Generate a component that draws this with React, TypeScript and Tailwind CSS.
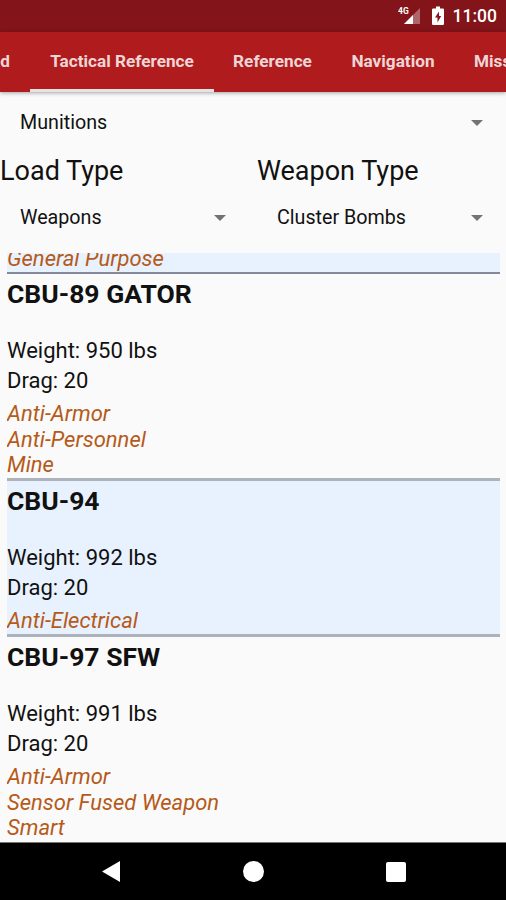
import React from 'react';

interface IMunition {
  name: string;
  weight: number;
  drag: number;
  tags: string[];
}

interface SpinnerProps {
  label: string;
  className: string;
}

const munitions: IMunition[] = [
  {
    name: 'CBU-89 GATOR', weight: 950, drag: 20, tags: ['Anti-Armor', 'Anti-Personnel', 'Mine'],
  },
  {
    name: 'CBU-94', weight: 992, drag: 20, tags: ['Anti-Electrical'],
  },
  {
    name: 'CBU-97 SFW', weight: 991, drag: 20, tags: ['Anti-Armor', 'Sensor Fused Weapon', 'Smart'],
  },
];

function StatusBar() {
  return (
    <div className="flex h-8 shrink-0 items-center justify-end bg-[#83141a] pr-[9px] text-white">
      <svg className="mr-[11px] h-5 w-[23px]" viewBox="0 0 23 20">
        <text x="0" y="8" fontSize="8.5" fontWeight="700" fill="#fff" fontFamily="Roboto, sans-serif">4G</text>
        <path d="M22 2v16H6z" fill="#fff" fillOpacity="0.35" />
        <path d="M15 9v9H6z" fill="#fff" />
      </svg>
      <svg className="mr-[9px] h-5 w-3" viewBox="0 0 12 20">
        <path d="M4 0.5h4v2h2.8q1.2 0 1.2 1.2v14.1q0 1.2-1.2 1.2H1.2Q0 19 0 17.800V3.700q0-1.200 1.200-1.200H4z" fill="#fff" />
        <path d="M7 5.500L3 11.500h2.500V16.500L9.200 10H7z" fill="#83141a" />
      </svg>
      <span className="text-[17.5px] font-medium leading-8">11:00</span>
    </div>
  );
}

function TabBar() {
  return (
    <div className="relative z-10 flex h-[60px] shrink-0 overflow-visible bg-[#b01c1d] text-[17.2px] font-bold text-[#eed6d6] shadow-[0_1px_4px_rgba(0,0,0,0.35)]">
      <div className="flex w-[30px] items-center justify-end overflow-hidden pr-5 whitespace-nowrap">Related</div>
      <div className="flex w-[184px] items-center justify-center border-b-[3px] border-[#e4e2e3] pt-[3px] whitespace-nowrap">Tactical Reference</div>
      <div className="flex w-[117px] items-center justify-center">Reference</div>
      <div className="flex w-[124px] items-center justify-center">Navigation</div>
      <div className="flex w-[51px] items-center overflow-hidden pl-[19px]">Missions</div>
    </div>
  );
}

function Spinner({ label, className }: SpinnerProps) {
  return (
    <div className={`flex items-center justify-between pl-5 text-[19.7px] ${className}`}>
      <span>{label}</span>
      <svg className="h-1.5 w-3" viewBox="0 0 12 6">
        <path d="M0 0h12L6 6z" fill="#737373" />
      </svg>
    </div>
  );
}

function MunitionRow({ item, shaded }: { item: IMunition; shaded: boolean }) {
  return (
    <div className={shaded ? 'bg-[#e8f2ff]' : ''}>
      <p className="mb-[23px] text-[26.5px] font-bold leading-[39px]">{item.name}</p>
      <p className="text-[22px] leading-[30px]">{`Weight: ${item.weight} lbs`}</p>
      <p className="mb-[5px] text-[22px] leading-[30px]">{`Drag: ${item.drag}`}</p>
      {item.tags.map((tag) => (
        <p key={tag} className="text-[22px] italic leading-[25.700px] text-[#b65a19]">{tag}</p>
      ))}
    </div>
  );
}

function NavBar() {
  return (
    <div className="flex h-[58px] shrink-0 items-center justify-between border-t border-[#777] bg-black pr-[100px] pl-[102px]">
      <svg className="h-[21px] w-[18px]" viewBox="0 0 18 21">
        <path d="M18 0v21L0 10.500z" fill="#fff" />
      </svg>
      <div className="h-[21px] w-[21px] rounded-full bg-white" />
      <div className="h-5 w-5 rounded-[2px] bg-white" />
    </div>
  );
}

function App() {
  return (
    <div className="flex h-[900px] w-[506px] flex-col overflow-hidden bg-[#fafafa] font-['Roboto',sans-serif] text-[#111]">
      <StatusBar />
      <TabBar />
      <Spinner label="Munitions" className="h-[62px] pr-[23px]" />
      <div className="flex h-[34px] shrink-0 items-center text-[27px]">
        <p className="w-[257px]">Load Type</p>
        <p>Weapon Type</p>
      </div>
      <div className="flex h-[65px] shrink-0 pb-[5px]">
        <Spinner label="Weapons" className="w-[257px] pr-[31px]" />
        <Spinner label="Cluster Bombs" className="w-[249px] pr-[23px]" />
      </div>
      <div className="mr-1.5 ml-[7px] min-h-0 grow overflow-hidden">
        <div className="flex h-[19px] flex-col justify-end overflow-hidden bg-[#e8f2ff]">
          <p className="shrink-0 text-[22px] italic leading-[25.700px] text-[#b65a19]">General Purpose</p>
        </div>
        <div className="divide-y-[3px] divide-[#adb3bc] border-t-2 border-[#85889a]">
          {munitions.map((item, index) => (
            <MunitionRow key={item.name} item={item} shaded={index % 2 === 1} />
          ))}
        </div>
      </div>
      <NavBar />
    </div>
  );
}

export default App;
